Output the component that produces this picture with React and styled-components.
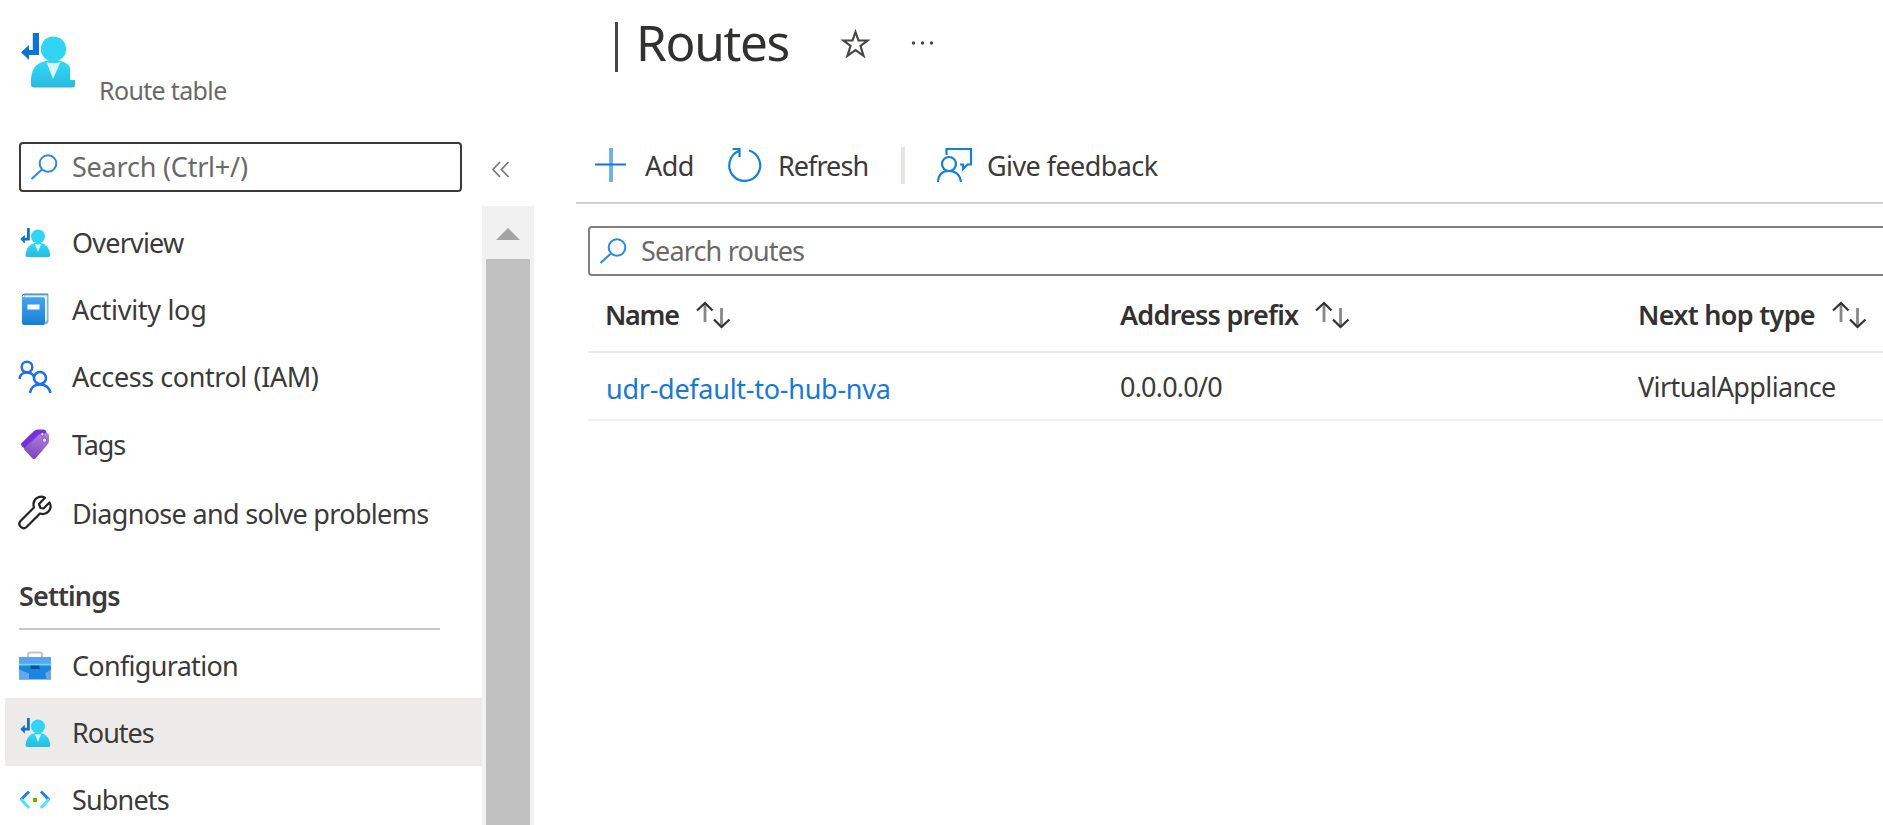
import React from 'react';
import styled, { createGlobalStyle } from 'styled-components';

const GlobalStyle = createGlobalStyle`
  * { box-sizing: border-box; }
  html, body { margin: 0; background: #fff; overflow: hidden; }
  body { font-family: "Noto Sans", "Open Sans", sans-serif; font-size: 27px; color: #323130; }
  svg { display: block; flex: none; overflow: visible; }
`;

const Page = styled.div`
  display: flex;
  width: 1883px;
  height: 825px;
  overflow: hidden;
`;

const Text = styled.span`
  display: block;
  white-space: nowrap;
  font-size: ${(p) => p.$size || 27}px;
  line-height: 40px;
  font-weight: ${(p) => p.$weight || 400};
  letter-spacing: ${(p) => p.$track || 0}px;
  color: ${(p) => p.$color || '#3b3a39'};
`;

const Sidebar = styled.aside`
  width: 534px;
  flex: none;
  display: flex;
  flex-direction: column;
`;

const ResourceHeader = styled.header`
  display: flex;
  height: 142px;
  padding: 32px 0 0 20px;
  gap: 23px;
`;

const ResourceType = styled.div`
  padding-top: 38px;
`;

const FilterRow = styled.div`
  display: flex;
  align-items: center;
  height: 64px;
  padding: 0 0 14px 19px;
  gap: 30px;
`;

const CollapseButton = styled.span`
  padding-top: 4px;
`;

const SearchBox = styled.div`
  display: flex;
  align-items: center;
  flex: none;
  width: ${(p) => p.$width}px;
  height: 50px;
  padding-left: 9px;
  gap: 14px;
  border: 2px solid ${(p) => p.$border};
  border-radius: 4px;
`;

const NavArea = styled.div`
  display: flex;
  flex: 1;
  min-height: 0;
`;

const NavList = styled.nav`
  width: 482px;
  padding: 1px 0 0 5px;
  overflow: hidden;
`;

const NavItem = styled.a`
  display: flex;
  align-items: center;
  height: ${(p) => p.$height}px;
  padding: 2px 0 0 13px;
  gap: 20px;
  background: ${(p) => (p.$active ? '#edebe9' : 'transparent')};
`;

const NavIcon = styled.span`
  width: 34px;
  height: 34px;
`;

const SectionTitle = styled.div`
  height: 77px;
  width: 421px;
  margin: 6px 0 1px 14px;
  padding-top: 23px;
  border-bottom: 2px solid #c8c8c8;
`;

const ScrollTrack = styled.div`
  width: 52px;
  display: flex;
  flex-direction: column;
  align-items: center;
  padding-top: 22px;
  gap: 19px;
  background: #f1f1f1;
`;

const ScrollThumb = styled.div`
  flex: 1;
  width: 44px;
  background: #c1c1c1;
`;

const Main = styled.main`
  flex: 1;
  min-width: 0;
  margin-left: 42px;
  overflow: hidden;
`;

const TitleBar = styled.div`
  display: flex;
  height: 130px;
  padding: 8px 0 0 39px;
`;

const TitleRule = styled.div`
  width: 3px;
  height: 50px;
  margin: 14px 18px 0 0;
  background: #484644;
`;

const Title = styled.h1`
  margin: 0;
  width: 204px;
  padding-top: 2px;
  font-size: 49.5px;
  font-weight: 400;
  line-height: 64px;
  letter-spacing: -1.3px;
  color: #323130;
`;

const TitleActions = styled.div`
  display: flex;
  gap: 41px;
  padding-top: 21px;
`;

const Toolbar = styled.div`
  display: flex;
  align-items: center;
  height: 74px;
  padding: 0 0 2px 19px;
  border-bottom: 2px solid #d2d0ce;
`;

const Command = styled.div`
  display: flex;
  align-items: center;
  width: ${(p) => p.$width}px;
  gap: ${(p) => p.$gap}px;
`;

const CommandLabel = styled(Text)`
  padding-top: 2px;
`;

const CommandDivider = styled.div`
  width: 4px;
  height: 37px;
  margin-right: 32px;
  background: #e6e4e2;
`;

const Content = styled.div`
  padding: 22px 0 0 12px;
`;

const Grid = styled.div`
  width: 1400px;
`;

const GridRow = styled.div`
  display: grid;
  grid-template-columns: 515px 518px 1fr;
  height: ${(p) => p.$height}px;
  padding: ${(p) => p.$top}px 0 0 17px;
  border-bottom: 2px solid ${(p) => p.$line};
`;

const HeaderCell = styled.div`
  display: flex;
  align-items: flex-start;
  gap: 17px;
`;

const ArrowSlot = styled.span`
  padding-top: 6px;
`;

const LinkCell = styled.div`
  padding: 2px 0 0 1px;
`;

function SearchIcon() {
  return (
    <svg width="28" height="28" viewBox="0 0 28 28" fill="none" stroke="#2b88d8" strokeWidth="2">
      <circle cx="18" cy="10.5" r="8.3" />
      <path d="M12 16.5L1.5 26" />
    </svg>
  );
}

function RouteTableLarge() {
  return (
    <svg width="56" height="58" viewBox="0 0 56 58">
      <defs>
        <linearGradient id="bodyLarge" x1="0" y1="0" x2="0" y2="1">
          <stop offset="0.2" stopColor="#32d4f5" />
          <stop offset="1" stopColor="#27b9dd" />
        </linearGradient>
      </defs>
      <path d="M12.800 1H19v22H9v5L1 20.300 9 13v5h3.800z" fill="#0a74da" />
      <path d="M22 30Q33 26 44 30Q48 32 50 35V48H55V53Q55 55.500 52 55.500H14Q11 55.500 11 53V49Q11 34 22 30Z" fill="url(#bodyLarge)" />
      <circle cx="33.500" cy="17" r="12.600" fill="#32d4f5" />
      <path d="M26.500 30Q33.500 32.500 40.500 30L33 47Z" fill="#d9f7fd" />
    </svg>
  );
}

function RouteTableIcon() {
  return (
    <svg width="34" height="34" viewBox="0 0 34 34">
      <defs>
        <linearGradient id="bodySmall" x1="0" y1="0" x2="0" y2="1">
          <stop offset="0.2" stopColor="#32d4f5" />
          <stop offset="1" stopColor="#22bce0" />
        </linearGradient>
      </defs>
      <path d="M9 2h2.800v12.500H6.800v3.200L2.300 13l4.500-4.300v3H9z" fill="#1170d0" />
      <path d="M14 18Q20 15 26 18Q31.500 21 32.300 29Q32.300 31 30.500 31H9.500Q7.500 31 7.500 29Q8.200 21 14 18Z" fill="url(#bodySmall)" />
      <circle cx="20" cy="10.500" r="7" fill="#32d4f5" />
      <path d="M16.800 17.800Q20 19 23.200 17.800L20 26Z" fill="#e6fafe" />
    </svg>
  );
}

function ActivityLogIcon() {
  return (
    <svg width="34" height="34" viewBox="0 0 34 34">
      <defs>
        <linearGradient id="book" x1="0" y1="0" x2="0" y2="1">
          <stop offset="0" stopColor="#45a7ee" />
          <stop offset="1" stopColor="#1780d4" />
        </linearGradient>
      </defs>
      <path d="M6 1H30.500V28Q30.500 31 27 31.500H6Z" fill="#7fb4e3" />
      <path d="M6.500 2.500H29V27L26 30H6Z" fill="#e4eff9" />
      <path d="M4 3Q4 4.300 7 4.300H25Q27 4.300 27 6.500V30Q27 32 25 32H6Q4 32 4 30Z" fill="url(#book)" />
      <path d="M4 3.500Q4 1 7 1H30" fill="none" stroke="#2f7fc8" strokeWidth="1" />
      <rect x="9.500" y="11.500" width="12" height="5" fill="#fff" />
    </svg>
  );
}

function AccessIcon() {
  return (
    <svg width="34" height="34" viewBox="0 -0.500 34 34" fill="none" stroke="#1f6feb" strokeWidth="2.500">
      <circle cx="9" cy="6.500" r="5.300" />
      <circle cx="22" cy="17.500" r="6" />
      <path d="M1.500 18.500Q2.500 12 8.500 12Q14.500 12 16 16.500M12 32.500Q13.500 24 22 24Q30.500 24 32.500 32.500" />
    </svg>
  );
}

function TagsIcon() {
  return (
    <svg width="34" height="34" viewBox="0 0 34 34">
      <defs>
        <linearGradient id="tag" x1="0.600" y1="0" x2="0.400" y2="1">
          <stop offset="0" stopColor="#b57be4" />
          <stop offset="1" stopColor="#7a45b8" />
        </linearGradient>
      </defs>
      <path d="M3.300 15.200L16 3Q17.500 1.500 19.500 1.500H25Q28 1.500 28.500 4.500V9L8 22L3.300 17.500Q2.300 16.300 3.300 15.200Z" fill="#7433d8" />
      <path d="M6.500 20L21 6.500Q22.500 5 24.500 5H28.500Q31 5 31 7.500V13Q31 15 29.500 16.500L17.500 30.500Q16 32 14.500 30.500L6.500 22Q5.700 21 6.500 20Z" fill="url(#tag)" />
      <circle cx="24.300" cy="6.200" r="1.700" fill="#eee5f8" stroke="#55308f" strokeWidth="0.700" />
      <circle cx="26.500" cy="12.200" r="2.200" fill="#eee5f8" stroke="#7b50ad" strokeWidth="1" />
    </svg>
  );
}

function WrenchIcon() {
  return (
    <svg width="34" height="34" viewBox="0 1.500 34 34" fill="none" stroke="#222" strokeWidth="2.200" strokeLinejoin="round">
      <path d="M27 2.200C21 -.8 13.500 4 16 12L2.500 25.500C-1 29.500 4.500 35 8.500 31.500L22 18C29 20.500 35 13 31.500 7L25.500 13L22.500 12.500L21 8.500Z" />
    </svg>
  );
}

function ConfigurationIcon() {
  return (
    <svg width="34" height="34" viewBox="0 -1.500 34 34">
      <path d="M10 7V4Q10 2 12 2H22Q24 2 24 4V7" fill="none" stroke="#c4c4c4" strokeWidth="2" />
      <path d="M1 6.500H33V29H1Z" fill="#1d84df" />
      <path d="M1 6.500H33V13H1Z" fill="#5da2f1" />
      <path d="M1 19L11 23V29H1ZM33 19L27 23L29 29H33Z" fill="#65a8f2" />
      <path d="M1 13H33V15H1Z" fill="#70d9ff" />
      <rect x="12.500" y="15" width="9" height="3.500" fill="#075497" />
    </svg>
  );
}

function SubnetsIcon() {
  return (
    <svg width="34" height="34" viewBox="0 0 34 34" fill="none" strokeWidth="3">
      <path d="M11 8.500L2.800 17M23 8.500L31.200 17" stroke="#1a85da" />
      <path d="M2.800 16L11 25M31.200 16L23 25" stroke="#50e2fb" />
      <rect x="15" y="15" width="4" height="4" fill="#5cb800" />
    </svg>
  );
}

function SortIcon() {
  return (
    <svg width="34" height="28" viewBox="0 0 34 28" fill="none">
      <path d="M9 2V21M25.500 7V26" stroke="#8a8886" strokeWidth="2.800" />
      <path d="M1 9.500L9 2L16.500 9.500M18 18.500L25.500 26L33.500 18.500" stroke="#323130" strokeWidth="2.200" />
    </svg>
  );
}

const resourceItems = [
  { label: 'Overview', icon: RouteTableIcon, height: 69, track: -0.8 },
  { label: 'Activity log', icon: ActivityLogIcon, height: 66, track: -0.3 },
  { label: 'Access control (IAM)', icon: AccessIcon, height: 67, track: -0.43 },
  { label: 'Tags', icon: TagsIcon, height: 69, track: -1.1 },
  { label: 'Diagnose and solve problems', icon: WrenchIcon, height: 69, track: -0.68 },
];

const settingsItems = [
  { label: 'Configuration', icon: ConfigurationIcon, height: 67, track: -0.7 },
  { label: 'Routes', icon: RouteTableIcon, height: 68, track: -1, active: true },
  { label: 'Subnets', icon: SubnetsIcon, height: 66, track: -0.85 },
];

const columns = [
  { label: 'Name', track: -1.3 },
  { label: 'Address prefix', track: -0.77 },
  { label: 'Next hop type', track: -0.7 },
];

function NavEntry({ item }) {
  const Icon = item.icon;
  return (
    <NavItem $height={item.height} $active={item.active}>
      <NavIcon><Icon /></NavIcon>
      <Text $track={item.track}>{item.label}</Text>
    </NavItem>
  );
}

export default function App() {
  return (
    <Page>
      <GlobalStyle />
      <Sidebar>
        <ResourceHeader>
          <RouteTableLarge />
          <ResourceType>
            <Text $size={25} $color="#6b6967" $track={-0.65}>Route table</Text>
          </ResourceType>
        </ResourceHeader>
        <FilterRow>
          <SearchBox $width={443} $border="#3b3a39">
            <SearchIcon />
            <Text $color="#6b6967" $track={-0.22}>Search (Ctrl+/)</Text>
          </SearchBox>
          <CollapseButton>
            <svg width="18" height="17" viewBox="0 0 18 17" fill="none" stroke="#797775" strokeWidth="1.700">
              <path d="M8 1L1 8.500L8 16M16.500 1L9.500 8.500L16.500 16" />
            </svg>
          </CollapseButton>
        </FilterRow>
        <NavArea>
          <NavList>
            {resourceItems.map((item) => <NavEntry key={item.label} item={item} />)}
            <SectionTitle>
              <Text $weight={600} $track={-0.88}>Settings</Text>
            </SectionTitle>
            {settingsItems.map((item) => <NavEntry key={item.label} item={item} />)}
          </NavList>
          <ScrollTrack>
            <svg width="24" height="12" viewBox="0 0 24 12"><path d="M0 12L12 0L24 12Z" fill="#a3a3a3" /></svg>
            <ScrollThumb />
          </ScrollTrack>
        </NavArea>
      </Sidebar>
      <Main>
        <TitleBar>
          <TitleRule />
          <Title>Routes</Title>
          <TitleActions>
            <svg width="30" height="30" viewBox="0 0 30 30" fill="none" stroke="#484644" strokeWidth="2.200">
              <path d="M15.500 3L18.500 11.500H27.500L20.500 17L23.500 26.800L15.500 21L7.500 26.800L10.500 17L3.500 11.500H12.500Z" />
            </svg>
            <svg width="24" height="30" viewBox="0 0 24 30" fill="#484644">
              <circle cx="2.500" cy="14" r="1.700" />
              <circle cx="11.500" cy="14" r="1.700" />
              <circle cx="20.500" cy="14" r="1.700" />
            </svg>
          </TitleActions>
        </TitleBar>
        <Toolbar>
          <Command $width={133} $gap={18}>
            <svg width="32" height="34" viewBox="0 0 32 34" fill="none">
              <path d="M16 0V34" stroke="#71b1e8" strokeWidth="4" />
              <path d="M0 16.500H31" stroke="#0f78d4" strokeWidth="2" />
            </svg>
            <CommandLabel $track={-0.5}>Add</CommandLabel>
          </Command>
          <Command $width={173} $gap={16}>
            <svg width="34" height="36" viewBox="0 0 34 36" fill="none" stroke="#1580d8" strokeWidth="2.200">
              <path d="M21 3.500A15.500 15.500 0 1 1 11 4M4.500 2H11.500V10" />
            </svg>
            <CommandLabel $track={-0.95}>Refresh</CommandLabel>
          </Command>
          <CommandDivider />
          <Command $width={300} $gap={15}>
            <svg width="35" height="36" viewBox="0 0 35 36" fill="none" stroke="#1580d8" strokeWidth="2.200">
              <circle cx="12" cy="17" r="7" />
              <path d="M1 35Q1.500 24 12 24Q22.500 24 24 35M9.500 8V2H34V17.500H30.500L26 22V17.500H23" />
            </svg>
            <CommandLabel $track={-0.58}>Give feedback</CommandLabel>
          </Command>
        </Toolbar>
        <Content>
          <SearchBox $width={1400} $border="#82807e">
            <SearchIcon />
            <Text $color="#6b6967" $track={-0.83}>Search routes</Text>
          </SearchBox>
          <Grid>
            <GridRow $height={77} $top={19} $line="#edebe9">
              {columns.map((c) => (
                <HeaderCell key={c.label}>
                  <Text $weight={600} $color="#323130" $track={c.track}>{c.label}</Text>
                  <ArrowSlot><SortIcon /></ArrowSlot>
                </HeaderCell>
              ))}
            </GridRow>
            <GridRow $height={68} $top={14} $line="#f1f0ef">
              <LinkCell><Text $color="#1878d4" $track={-0.27}>udr-default-to-hub-nva</Text></LinkCell>
              <Text $track={-0.8}>0.0.0.0/0</Text>
              <Text $track={-0.6}>VirtualAppliance</Text>
            </GridRow>
          </Grid>
        </Content>
      </Main>
    </Page>
  );
}
